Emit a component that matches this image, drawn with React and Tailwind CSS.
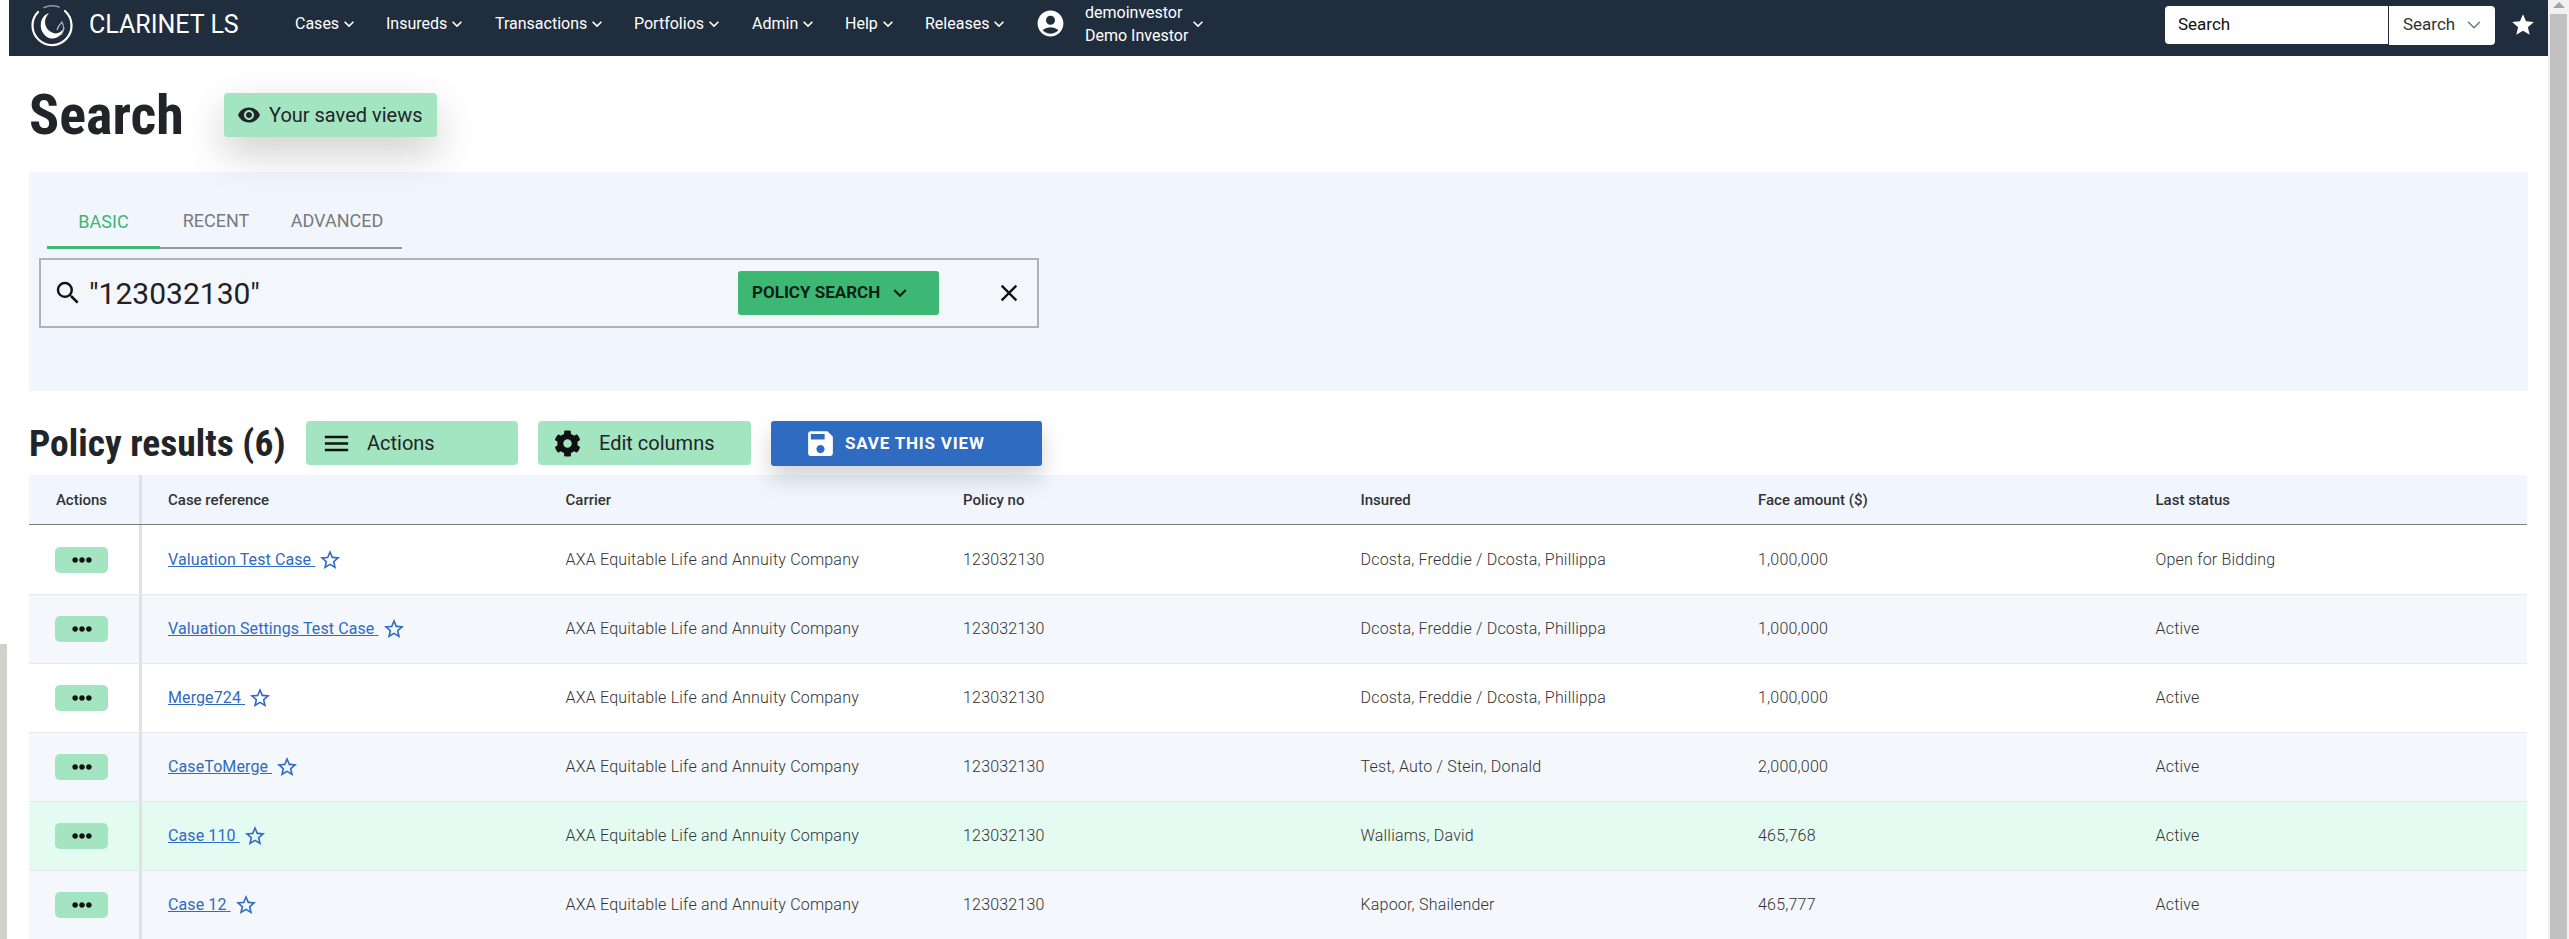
import React from 'react';
import { ChevronDown } from 'lucide-react';
import { FaCog, FaEllipsisH } from 'react-icons/fa';
import { MdAccountCircle, MdClose, MdExpandMore, MdKeyboardArrowDown, MdMenu, MdSave, MdSearch, MdStar, MdStarBorder, MdVisibility } from 'react-icons/md';

const navItems = [
  { label: 'Cases', className: 'w-[91px]' },
  { label: 'Insureds', className: 'w-[109px]' },
  { label: 'Transactions', className: 'w-[139px]' },
  { label: 'Portfolios', className: 'w-[118px]' },
  { label: 'Admin', className: 'w-[93px]' },
  { label: 'Help', className: 'w-[80px]' },
  { label: 'Releases', className: 'w-[113px]' },
];

const rows = [
  { ref: 'Valuation Test Case', insured: 'Dcosta, Freddie / Dcosta, Phillippa', face: '1,000,000', status: 'Open for Bidding', bg: 'h-[70px] bg-white' },
  { ref: 'Valuation Settings Test Case', insured: 'Dcosta, Freddie / Dcosta, Phillippa', face: '1,000,000', status: 'Active', bg: 'h-[69px] bg-[#f4f7fb]' },
  { ref: 'Merge724', insured: 'Dcosta, Freddie / Dcosta, Phillippa', face: '1,000,000', status: 'Active', bg: 'h-[69px] bg-white' },
  { ref: 'CaseToMerge', insured: 'Test, Auto / Stein, Donald', face: '2,000,000', status: 'Active', bg: 'h-[69px] bg-[#f4f7fb]' },
  { ref: 'Case 110', insured: 'Walliams, David', face: '465,768', status: 'Active', bg: 'h-[69px] bg-[#e4fbf2]' },
  { ref: 'Case 12', insured: 'Kapoor, Shailender', face: '465,777', status: 'Active', bg: 'h-[69px] bg-[#f4f7fb]' },
];

const headers = ['Case reference', 'Carrier', 'Policy no', 'Insured', 'Face amount ($)', 'Last status'];

const Logo = () => (
  <svg width="42" height="44" viewBox="0 0 42 44" fill="none" className="mt-[5px] shrink-0">
    <path d="M7 8 A19.5 19.5 0 1 0 34 7" stroke="#fff" strokeWidth="2.2" strokeLinecap="round" />
    <path d="M13 3.5 A19.5 19.5 0 0 1 28 3" stroke="#8f99a2" strokeWidth="1.5" strokeLinecap="round" />
    <path d="M18 9 C8 12 7 27 16 33 C23 37 31 33 34 23 C30 29 25 31 20 28 C13 24 12 15 18 9 Z" fill="#fff" />
    <path d="M26 26 C27 22 29 20 31 18 C33 22 33 27 30 31" stroke="#aeb6bd" strokeWidth="1.2" />
  </svg>
);

const App = () => {
  return (
    <div className="relative flex h-[939px] overflow-hidden bg-white font-['Roboto',sans-serif] text-[#212529]">
      <div className="absolute bottom-0 left-0 h-[295px] w-[7px] bg-[#d1d1cc]"></div>

      <div className="w-[2548px] shrink-0">
        <nav className="ml-[9px] flex h-14 items-center bg-[#1f2d3d] pb-[9px] text-white">
          <div className="ml-[22px] flex w-[264px] items-center gap-[16px]">
            <Logo />
            <span className="mt-[2px] text-[25px] leading-none">CLARINET LS</span>
          </div>
          {navItems.map((item) => (
            <div key={item.label} className={`flex items-center text-[16px] ${item.className}`}>
              {item.label}
              <MdKeyboardArrowDown className="text-[20px]" />
            </div>
          ))}
          <MdAccountCircle className="-ml-[3px] text-[31px]" />
          <div className="ml-[19px] text-[16px] leading-[23px]">
            <div>demoinvestor</div>
            <div>Demo Investor</div>
          </div>
          <MdKeyboardArrowDown className="text-[20px]" />
          <div className="ml-auto mt-[3px] flex items-center">
            <div className="flex h-[38px] w-[223px] items-center rounded-l-[4px] bg-white pl-[13px] text-[17px] text-[#111]">Search</div>
            <div className="ml-px flex h-[39px] w-[106px] items-center justify-between rounded-r-[4px] bg-white pl-[14px] pr-[10px] text-[17px] text-[#333]">
              Search
              <ChevronDown size={22} strokeWidth={1.5} className="text-[#6c757d]" />
            </div>
            <MdStar className="ml-[15px] mr-[12px] text-[26px]" />
          </div>
        </nav>

        <main className="pl-[29px] pr-[20px]">
          <div className="flex items-start pt-[37px]">
            <h1 className="w-[195px] text-[56px] font-bold leading-[44px] font-stretch-condensed">Search</h1>
            <button className="flex h-11 w-[213px] items-center gap-[8px] rounded bg-[#a3e4c1] pl-[13px] text-[20px] shadow-[0_16px_40px_rgba(0,0,0,0.2)]">
              <MdVisibility className="text-[24px]" />
              Your saved views
            </button>
          </div>

          <section className="mt-[35px] h-[219px] bg-[#f1f6fe] pt-[32px]">
            <div className="ml-[18px] flex h-[45px] w-[355px] border-b-2 border-[#999] text-[18px] text-[#7a7a7a]">
              <div className="-mb-0.5 flex w-[113px] justify-center border-b-[3px] border-[#3cb774] pt-[4px] text-[#3cb774]">BASIC</div>
              <div className="flex w-[112px] justify-center pt-[3px]">RECENT</div>
              <div className="flex w-[130px] justify-center pt-[3px]">ADVANCED</div>
            </div>
            <div className="ml-[10px] mt-[9px] flex h-[70px] w-[1000px] items-center border-2 border-[#b0b2b4] bg-[#f3f7fb]">
              <MdSearch className="ml-[12px] text-[30px] text-[#111]" />
              <span className="ml-[6px] w-[649px] text-[30px] text-[#222]">"123032130"</span>
              <button className="flex h-11 w-[201px] items-center gap-[7px] rounded-[3px] bg-[#3cb774] pl-[14px] text-[17px] font-bold text-[#0c1f14]">
                POLICY SEARCH
                <MdExpandMore className="text-[26px]" />
              </button>
              <MdClose className="ml-[56px] text-[28px] text-[#111]" />
            </div>
          </section>

          <div className="mt-[30px] flex items-start">
            <h2 className="w-[277px] text-[37.5px] font-bold leading-[44px] font-stretch-condensed">Policy results (6)</h2>
            <button className="flex h-11 w-[212px] items-center rounded bg-[#a3e4c1] pl-[15px] text-[20px]">
              <MdMenu className="text-[31px] text-[#111]" />
              <span className="ml-[15px]">Actions</span>
            </button>
            <button className="ml-5 flex h-11 w-[213px] items-center rounded bg-[#a3e4c1] pl-[16px] text-[20px]">
              <FaCog className="text-[27px] text-[#111]" />
              <span className="ml-[18px]">Edit columns</span>
            </button>
            <button className="ml-5 flex h-[45px] w-[271px] items-center rounded-[3px] bg-[#2f6bc0] pl-[33px] text-[17px] font-bold tracking-[0.8px] text-white shadow-[0_12px_24px_rgba(0,0,0,0.18)]">
              <MdSave className="text-[33px]" />
              <span className="ml-[8px]">SAVE THIS VIEW</span>
            </button>
          </div>

          <div className="mr-px mt-[9px]">
            <div className="grid h-[50px] grid-cols-[113px_repeat(6,1fr)] border-b border-[#7b7d80] bg-[#f1f6fe] text-[15px] font-medium text-[#333]">
              <div className="flex items-center justify-center border-r-[3px] border-[#dfe1e3] pr-[5px] pt-px">Actions</div>
              {headers.map((h) => (
                <div key={h} className="flex items-center pl-[26px] pt-px">{h}</div>
              ))}
            </div>
            {rows.map((row) => (
              <div key={row.ref} className={`grid grid-cols-[113px_repeat(6,1fr)] border-b border-[#e6e9ec] text-[16px] font-light tracking-[0.2px] text-[#333] ${row.bg}`}>
                <div className="flex items-center justify-center border-r-[3px] border-[#dfe1e3] pr-[5px]">
                  <button className="flex h-[26px] w-[53px] items-center justify-center rounded-[5px] bg-[#a3e4c1] text-[#111]">
                    <FaEllipsisH className="text-[20px]" />
                  </button>
                </div>
                <div className="flex items-center pl-[26px]">
                  <a href="#" className="whitespace-pre font-normal tracking-[0.1px] text-[#2f6bc0] underline">{row.ref} </a>
                  <MdStarBorder className="ml-[3px] text-[24px] text-[#2f6bc0]" />
                </div>
                <div className="flex items-center pl-[26px]">AXA Equitable Life and Annuity Company</div>
                <div className="flex items-center pl-[26px]">123032130</div>
                <div className="flex items-center pl-[26px]">{row.insured}</div>
                <div className="flex items-center pl-[26px]">{row.face}</div>
                <div className="flex items-center pl-[26px]">{row.status}</div>
              </div>
            ))}
          </div>
        </main>
      </div>

      <div className="flex w-[21px] shrink-0 flex-col items-center bg-[#f1f1f1] pt-[2px]">
        <div className="h-0 w-0 border-x-[6px] border-b-[6px] border-x-transparent border-b-[#a3a3a3]"></div>
        <div className="mt-[6px] w-[17px] flex-1 bg-[#c1c1c1]"></div>
      </div>
    </div>
  );
};

export default App;
